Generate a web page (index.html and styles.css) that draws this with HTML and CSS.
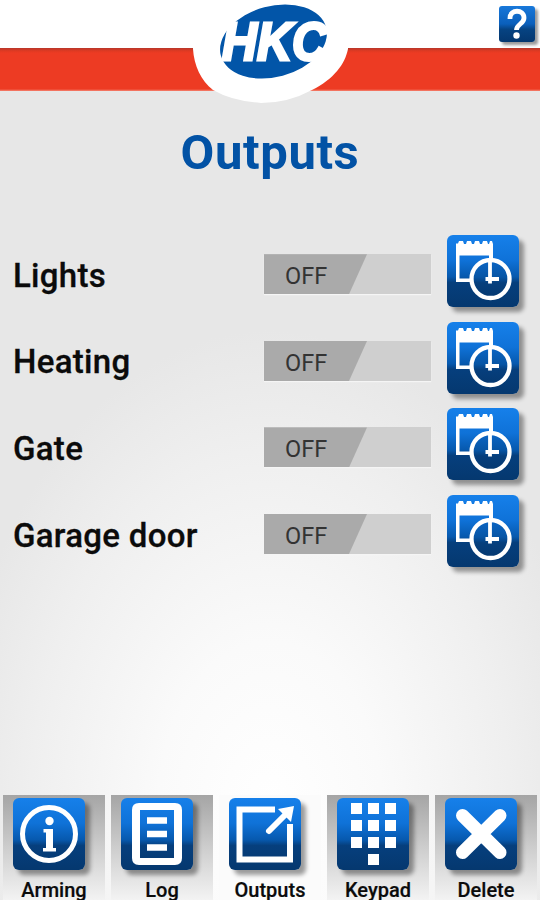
FILE: index.html
```html
<!DOCTYPE html>
<html lang="en">
<head>
    <meta charset="UTF-8">
    <meta name="viewport" content="width=device-width, initial-scale=1.0">
    <title>HKC - Outputs</title>
    <link rel="stylesheet" href="styles.css">
</head>
<body>
    <!-- Shared icons -->
    <svg class="icon-defs" width="0" height="0">
        <linearGradient id="face" x1="0" y1="0" x2="0" y2="1">
            <stop offset="0" stop-color="#0b66c6"/>
            <stop offset="0.45" stop-color="#0755a5"/>
            <stop offset="0.6" stop-color="#063f7d"/>
            <stop offset="1" stop-color="#053870"/>
        </linearGradient>
        <symbol id="icon-schedule" viewBox="0 0 72 72">
            <path d="M9 8.500H11L12 6H16L17 9H19L20 6H24L25 9H27L28 6H32L33 9H35L36 6H40L41 9H42L43 6H45L46 9V30H42V20.500H12.500V43.500H27V47H9Z" fill="#fff"/>
            <circle cx="43.500" cy="44" r="19" fill="url(#face)" stroke="#fff" stroke-width="4.300"/>
            <path d="M43 25v23.500M38.500 44h13.500" stroke="#fff" stroke-width="3.800" fill="none"/>
        </symbol>
    </svg>

    <div class="app">
        <header class="header">
            <svg class="logo" width="164" height="108" viewBox="188 0 164 108">
                <path d="M192 0H348V49C345 64 334 79 312 90Q288 103 261 103Q232 101 213 90C201 81 194 65 193 49Z" fill="#fff"/>
                <ellipse cx="273.500" cy="41.500" rx="54.500" ry="35.500" transform="rotate(-15 273.500 41.500)" fill="#0255a8"/>
                <text x="222" y="60" textLength="105" lengthAdjust="spacingAndGlyphs" class="logo-text">HKC</text>
            </svg>
            <button class="help-btn" aria-label="Help">
                <svg width="36" height="36" viewBox="0 0 36 36">
                    <path d="M11 13V12C11 3 25 3 25 12C25 18 17.500 18 17.500 24" fill="none" stroke="#fff" stroke-width="4.800"/>
                    <circle cx="17.500" cy="29.500" r="3.200" fill="#fff"/>
                </svg>
            </button>
        </header>

        <main class="content">
            <h1>Outputs</h1>
            <div class="output-list">
                <div class="output-row">
                    <span class="output-name">Lights</span>
                    <button class="toggle"><span class="toggle-thumb">OFF</span></button>
                    <button class="icon-btn" aria-label="Schedule"><svg><use href="#icon-schedule"/></svg></button>
                </div>
                <div class="output-row">
                    <span class="output-name">Heating</span>
                    <button class="toggle"><span class="toggle-thumb">OFF</span></button>
                    <button class="icon-btn" aria-label="Schedule"><svg><use href="#icon-schedule"/></svg></button>
                </div>
                <div class="output-row">
                    <span class="output-name">Gate</span>
                    <button class="toggle"><span class="toggle-thumb">OFF</span></button>
                    <button class="icon-btn" aria-label="Schedule"><svg><use href="#icon-schedule"/></svg></button>
                </div>
                <div class="output-row">
                    <span class="output-name">Garage door</span>
                    <button class="toggle"><span class="toggle-thumb">OFF</span></button>
                    <button class="icon-btn" aria-label="Schedule"><svg><use href="#icon-schedule"/></svg></button>
                </div>
            </div>
        </main>

        <nav class="tab-bar">
            <a class="tab">
                <span class="icon-btn">
                    <svg viewBox="0 0 72 72">
                        <circle cx="36" cy="36" r="26.500" fill="none" stroke="#fff" stroke-width="5"/>
                        <circle cx="36.500" cy="23" r="4.200" fill="#fff"/>
                        <path d="M30.500 31h9.500v19h3v3.500H30V50h3V34.500h-2.500z" fill="#fff"/>
                    </svg>
                </span>
                <span class="tab-label">Arming</span>
            </a>
            <a class="tab">
                <span class="icon-btn">
                    <svg viewBox="0 0 72 72">
                        <path fill-rule="evenodd" d="M18 5H54Q61 5 61 12V60Q61 67 54 67H18Q11 67 11 60V12Q11 5 18 5ZM19 12V60H53V12Z" fill="#fff"/>
                        <path d="M26 22.500H46M26 36H46M26 49.500H46" stroke="#fff" stroke-width="6.500"/>
                    </svg>
                </span>
                <span class="tab-label">Log</span>
            </a>
            <a class="tab active">
                <span class="icon-btn">
                    <svg viewBox="0 0 72 72">
                        <path d="M46 11.500H10.500V61.500H61V26" fill="none" stroke="#fff" stroke-width="6"/>
                        <path d="M40 33L57 16" stroke="#fff" stroke-width="6" stroke-linecap="round"/>
                        <path d="M65 8L62 24L49 11Z" fill="#fff"/>
                    </svg>
                </span>
                <span class="tab-label">Outputs</span>
            </a>
            <a class="tab">
                <span class="icon-btn">
                    <svg viewBox="0 0 72 72">
                        <path d="M14 5h11v11H14zM31 5h11v11H31zM48 5h11v11H48zM14 22h11v11H14zM31 22h11v11H31zM48 22h11v11H48zM14 39h11v11H14zM31 39h11v11H31zM48 39h11v11H48zM31 56h11v11H31z" fill="#fff"/>
                    </svg>
                </span>
                <span class="tab-label">Keypad</span>
            </a>
            <a class="tab">
                <span class="icon-btn">
                    <svg viewBox="0 0 72 72">
                        <path d="M17.500 17.500L55 54.500M55 17.500L17.500 54.500" stroke="#fff" stroke-width="13" stroke-linecap="round"/>
                    </svg>
                </span>
                <span class="tab-label">Delete</span>
            </a>
        </nav>
    </div>
</body>
</html>
```
FILE: styles.css
```css
* {
    box-sizing: border-box;
}
body {
    margin: 0;
    font-family: Roboto, "Liberation Sans", sans-serif;
    color: #0b0b0b;
}
button {
    border: none;
    padding: 0;
    font-family: inherit;
    cursor: pointer;
}
.icon-defs {
    position: absolute;
}
.app {
    display: flex;
    flex-direction: column;
    height: 900px;
    overflow: hidden;
    background: radial-gradient(ellipse 320px 480px at 50% 810px, #fff 0%, #fafafa 35%, #efefef 75%, #e7e7e7 100%);
}
.header {
    position: relative;
    height: 91px;
    background: linear-gradient(#fff 48px, #b8372a 48px, #e03a22 51px, #ed3b23 53px, #ed3b23 89px, #f58674 91px);
}
.logo {
    position: absolute;
    left: 188px;
    top: 0;
}
.logo-text {
    font: italic bold 53px "Liberation Sans", sans-serif;
    fill: #fff;
    stroke: #fff;
    stroke-width: 3px;
}
.help-btn {
    position: absolute;
    top: 6px;
    right: 5px;
    width: 36px;
    height: 36px;
    border-radius: 3px;
    background: linear-gradient(#1878da, #0a5fbb 50%, #064382 65%, #04376f);
    box-shadow: 3px 3px 3px rgba(0, 0, 0, 0.4);
}
.help-btn svg {
    display: block;
}
.content {
    flex: 1;
}
h1 {
    margin: 34px 0 0;
    font-size: 49px;
    line-height: 56px;
    letter-spacing: 0.6px;
    text-align: center;
    color: #0252a5;
}
.output-list {
    padding: 47px 21px 0 13px;
}
.output-row {
    display: flex;
    align-items: center;
    height: 86.6px;
}
.output-name {
    flex: 1;
    font-size: 33px;
    font-weight: 500;
    letter-spacing: 0.3px;
    padding-top: 8px;
    -webkit-text-stroke: 0.3px #0b0b0b;
}
.toggle {
    width: 167px;
    height: 40px;
    margin: 6px 16px 0 0;
    background: #cfcfcf;
    text-align: left;
    box-shadow: 0 1px 1px #f5f5f5;
}
.toggle-thumb {
    display: block;
    width: 103px;
    height: 40px;
    padding: 2px 0 0 21px;
    font-size: 23.5px;
    line-height: 40px;
    color: #333;
    background: #aaa;
    clip-path: polygon(0 0, 100% 0, 85px 100%, 0 100%);
}
.icon-btn {
    display: block;
    width: 72px;
    height: 72px;
    border-radius: 6px;
    background: linear-gradient(#1680ea, #0f72d8 35%, #0759ae 58%, #063f7d 66%, #05386f);
    box-shadow: 5px 5px 4px rgba(0, 0, 0, 0.38);
}
.icon-btn svg {
    display: block;
    width: 100%;
    height: 100%;
}
.tab-bar {
    display: grid;
    grid-template-columns: repeat(5, 102px);
    gap: 6px;
    height: 105px;
    padding-left: 3px;
}
.tab {
    padding: 3px 0 0 10px;
    background: linear-gradient(#a5a5a5, #cdcdcd 50%, #f3f3f3);
}
.tab.active {
    background: #fbfbfb;
}
.tab-label {
    display: block;
    margin: 10px 0 0 -10px;
    font-size: 20px;
    font-weight: 500;
    line-height: 20px;
    text-align: center;
    -webkit-text-stroke: 0.2px #0b0b0b;
}
```
